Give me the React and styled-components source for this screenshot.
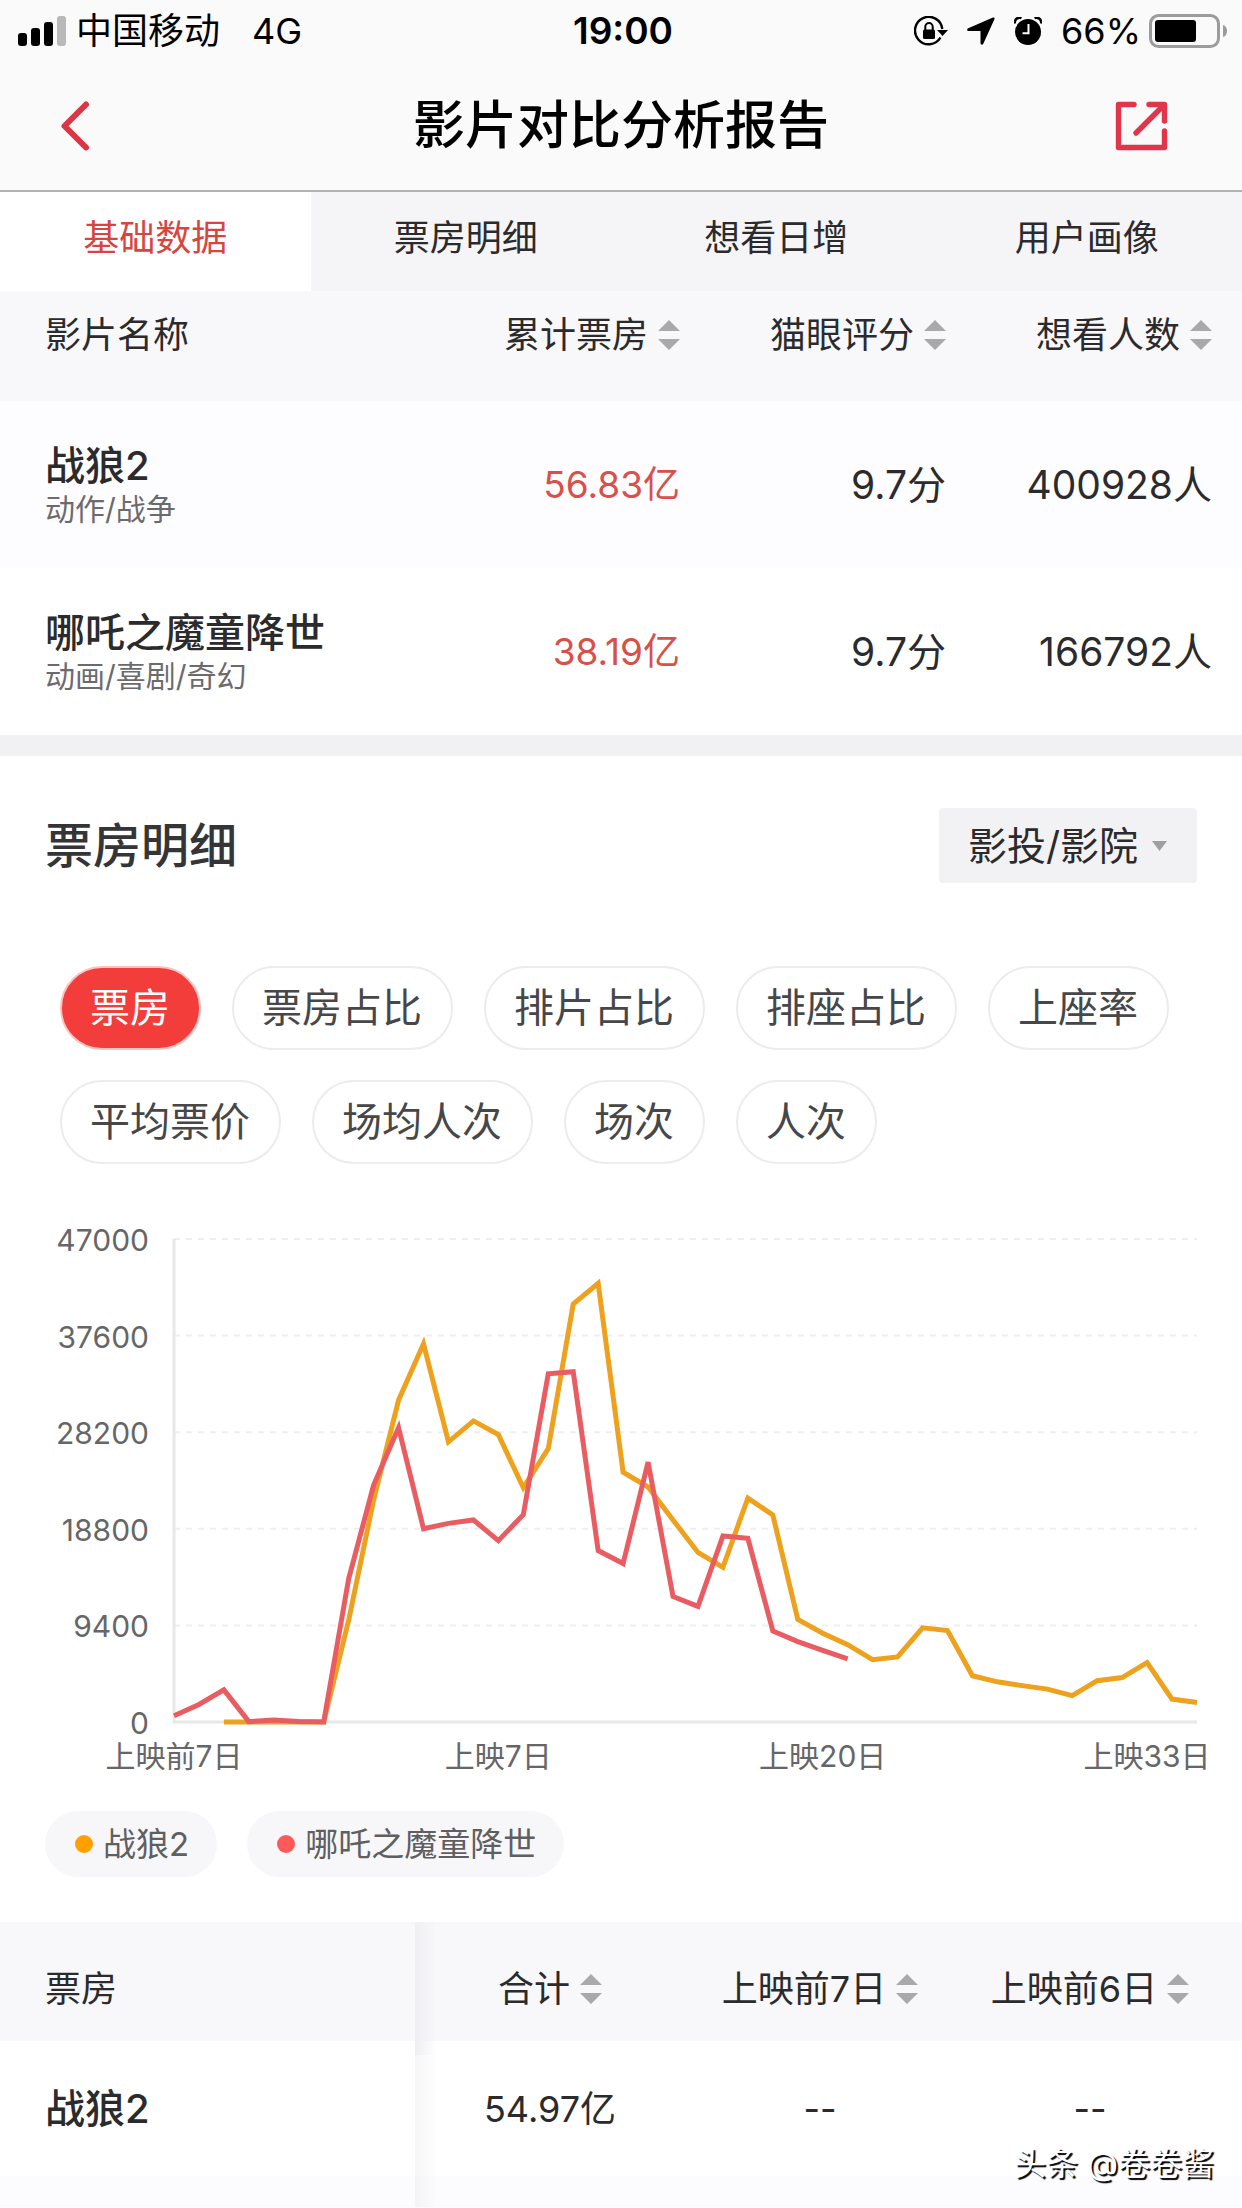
import React, { useState } from 'react'
import styled, { createGlobalStyle, css } from 'styled-components'

const GlobalStyle = createGlobalStyle`
  * {
    box-sizing: border-box;
  }
  body {
    margin: 0;
    background: #fff;
    color: #2b2b2d;
    font-family: Inter, 'Noto Sans CJK SC', sans-serif;
    font-size: 36px;
  }
  button, select {
    margin: 0;
    padding: 0;
    border: 0;
    background: none;
    color: inherit;
    font: inherit;
  }
  h1, h2, p {
    margin: 0;
  }
`

const Page = styled.div`
  min-height: 100vh;
  overflow: hidden;
`

const TopBar = styled.header`
  background: #fafafa;
  border-bottom: 2px solid #b2b2b4;
`

const StatusBar = styled.div`
  display: grid;
  grid-template-columns: 1fr auto 1fr;
  align-items: center;
  height: 62px;
  padding: 0 14px 0 18px;
  color: #000;
  line-height: 44px;
`

const StatusGroup = styled.div`
  display: flex;
  align-items: center;
  justify-content: ${props => props.$end ? 'flex-end' : 'flex-start'};
  gap: ${props => props.$gap}px;
`

const Carrier = styled.span`
  margin-right: 22px;
`

const Clock = styled.time`
  font-size: 37px;
  font-weight: 600;
`

const Battery = styled.span`
  display: flex;
  align-items: center;
  gap: 8px;
`

const NavBar = styled.div`
  display: grid;
  grid-template-columns: 1fr auto 1fr;
  align-items: center;
  height: 128px;
  padding: 0 58px;
`

const PageTitle = styled.h1`
  color: #000;
  font-size: 52px;
  font-weight: 500;
  line-height: 72px;
`

const IconButton = styled.button`
  display: flex;
  justify-self: ${props => props.$end ? 'end' : 'start'};
  padding-right: ${props => props.$end ? 15 : 0}px;
  cursor: pointer;
`

const Tabs = styled.nav`
  display: grid;
  grid-template-columns: repeat(4, 1fr);
  background: #f5f4f6;
`

const Tab = styled.button`
  height: 99px;
  padding-bottom: 8px;
  line-height: 52px;
  cursor: pointer;
  ${props => props.$active && css`
    background: #fff;
    color: #d8453f;
  `}
`

const Table = styled.table`
  width: 100%;
  border-collapse: collapse;
  table-layout: fixed;
`

const HeadRow = styled.tr`
  background: #f8f7fa;
  line-height: 52px;
`

const MovieHead = styled.th`
  width: ${props => props.$width || 'auto'};
  height: 110px;
  padding: 0 0 22px;
  font-weight: 400;
  text-align: right;
  &:first-child {
    padding-left: 45px;
    text-align: left;
  }
  &:last-child {
    padding-right: 30px;
  }
`

const SortButton = styled.button`
  display: inline-flex;
  align-items: center;
  gap: 10px;
  white-space: nowrap;
  cursor: pointer;
`

const MovieRow = styled.tr`
  background: ${props => props.$tinted ? '#fdfcfe' : '#fff'};
`

const MovieCell = styled.td`
  height: 167px;
  padding: 0;
  color: ${props => props.$red ? '#d8504a' : 'inherit'};
  font-size: ${props => props.$red ? 37 : 39}px;
  line-height: 56px;
  text-align: right;
  &:last-child {
    padding-right: 30px;
  }
`

const MovieNameCell = styled.th`
  padding: 4px 0 0 45px;
  font-weight: 400;
  text-align: left;
  white-space: nowrap;
`

const MovieName = styled.p`
  font-size: 40px;
  font-weight: 500;
  line-height: 44px;
`

const Genre = styled.p`
  color: #6b6b6e;
  font-size: 30px;
  line-height: 42px;
`

const Divider = styled.hr`
  height: 21px;
  margin: 0;
  border: 0;
  background: #f1f0f3;
`

const SectionHead = styled.div`
  display: flex;
  align-items: center;
  justify-content: space-between;
  padding: 52px 45px 0;
`

const SectionTitle = styled.h2`
  color: #353538;
  font-size: 48px;
  font-weight: 500;
  line-height: 72px;
`

const SelectBox = styled.label`
  display: grid;
  align-items: center;
  background: #f2f2f4;
  border-radius: 4px;
  svg {
    grid-area: 1 / 1;
    justify-self: end;
    margin-right: 30px;
    pointer-events: none;
  }
`

const Select = styled.select`
  grid-area: 1 / 1;
  height: 75px;
  padding: 0 58px 0 29px;
  appearance: none;
  font-size: 39px;
  line-height: 56px;
`

const Chips = styled.div`
  display: flex;
  flex-wrap: wrap;
  gap: 30px 31px;
  padding: 83px 60px 0;
`

const Chip = styled.button`
  height: 84px;
  padding: 0 29px 0 28px;
  border: 2px solid ${props => props.$active ? '#fbc4c1' : '#ececed'};
  border-radius: 42px;
  background: ${props => props.$active ? '#f23d3a' : '#fff'};
  color: ${props => props.$active ? '#fff' : '#47474a'};
  font-size: 40px;
  line-height: 56px;
  cursor: pointer;
`

const Chart = styled.svg`
  display: block;
  width: 100%;
  margin-top: 46px;
  text {
    fill: #666669;
    font-size: 30px;
  }
`

const Legend = styled.div`
  display: flex;
  gap: 30px;
  padding: 33px 45px 45px;
`

const LegendItem = styled.span`
  display: flex;
  align-items: center;
  gap: 10px;
  height: 66px;
  padding: 0 28px 0 30px;
  border-radius: 33px;
  background: #f7f6f9;
  color: #5f5f62;
  font-size: 33px;
  line-height: 48px;
`

const Dot = styled.span`
  width: 18px;
  height: 18px;
  border-radius: 50%;
  background: ${props => props.$color};
`

const DailyHead = styled.th`
  width: ${props => props.$width || 'auto'};
  height: 119px;
  padding: 28px ${props => props.$last ? 17 : 0}px 14px 0;
  font-weight: 400;
`

const frozen = css`
  position: relative;
  z-index: 1;
  padding-left: 45px;
  background: inherit;
  text-align: left;
  &::after {
    content: '';
    position: absolute;
    left: 100%;
    top: 0;
    bottom: 0;
    width: 22px;
    background: linear-gradient(to right, rgba(40, 30, 60, 0.04), rgba(40, 30, 60, 0));
  }
`

const FrozenHead = styled(DailyHead)`
  ${frozen}
  z-index: 2;
  &::after {
    bottom: -14px;
  }
`

const DailyRow = styled.tr`
  background: ${props => props.$tinted ? '#fcfbfd' : '#fff'};
`

const DailyCell = styled.td`
  height: ${props => props.$short ? 31 : 135}px;
  padding: 0 ${props => props.$last ? 17 : 0}px 0 0;
  line-height: 56px;
  text-align: center;
`

const FrozenCell = styled(DailyCell)`
  ${frozen}
  font-size: 40px;
  font-weight: 500;
`

const Watermark = styled.span`
  position: absolute;
  right: 28px;
  top: 2140px;
  color: #fff;
  font-size: 32px;
  line-height: 48px;
  text-shadow: 2px 2px 1px #000;
`

const DAYS = 42
const MAX = 47000

const series = [
  {
    name: '战狼2',
    color: '#ff9f00',
    stroke: '#eda11c',
    start: 2,
    values: [
      0, 0, 0, 0, 0, 9900, 21600, 31320, 36800, 27260, 29300, 27970, 22800, 26600,
      40670, 42680, 24300, 22870, 19660, 16500, 15050, 21790, 20150, 9980, 8640, 7520,
      6070, 6330, 9160, 8900, 4500, 3910, 3540, 3200, 2570, 4020, 4320, 5770, 2230, 1900,
    ],
  },
  {
    name: '哪吒之魔童降世',
    color: '#ff5a5a',
    stroke: '#e95d62',
    start: 0,
    values: [
      600, 1710, 3130, 40, 190, 40, 0, 13930, 23050, 28640, 18810, 19330, 19660, 17650,
      20180, 33890, 34080, 16680, 15420, 25290, 12215, 11250, 18100, 17880, 8860, 7820,
      6960, 6150,
    ],
  },
]

const xLabels = [
  { day: 0, text: '上映前7日' },
  { day: 13, text: '上映7日' },
  { day: 26, text: '上映20日' },
  { day: 39, text: '上映33日' },
]

const movies = [
  { name: '战狼2', genre: '动作/战争', total: '56.83亿', score: '9.7分', fans: '400928人' },
  { name: '哪吒之魔童降世', genre: '动画/喜剧/奇幻', total: '38.19亿', score: '9.7分', fans: '166792人' },
]

const tabs = ['基础数据', '票房明细', '想看日增', '用户画像']
const metrics = ['票房', '票房占比', '排片占比', '排座占比', '上座率', '平均票价', '场均人次', '场次', '人次']

const SignalIcon = () => (
  <svg width="48" height="30" viewBox="0 0 48 30" aria-hidden="true">
    <rect x="0" y="17" width="9" height="13" rx="3" />
    <rect x="13" y="12" width="9" height="18" rx="3" />
    <rect x="26" y="6" width="9" height="24" rx="3" />
    <rect x="39" y="0" width="9" height="30" rx="3" fill="#b9b9b9" />
  </svg>
)

const RotationLockIcon = () => (
  <svg width="34" height="30" viewBox="0 0 34 30" aria-hidden="true">
    <path d="M26.5 21.5A13.7 13.7 0 1 1 28.3 13" fill="none" stroke="#000" strokeWidth="2.4" />
    <path d="M23 14h11l-5.500 6z" />
    <rect x="9" y="13.500" width="12" height="9.500" rx="1.500" />
    <path d="M11.300 14v-3.200a3.700 3.700 0 0 1 7.400 0V14" fill="none" stroke="#000" strokeWidth="2" />
  </svg>
)

const LocationIcon = () => (
  <svg width="28" height="28" viewBox="0 0 28 28" aria-hidden="true">
    <path d="M26 .6 1.200 11.200c-1.700.8-1.300 2.800.6 2.800h11.700v12c0 2 2.100 2.300 2.900.5L27.400 2.200C28 .9 27.200.1 26 .6z" />
  </svg>
)

const AlarmIcon = () => (
  <svg width="28" height="28" viewBox="0 0 28 28" aria-hidden="true">
    <circle cx="14" cy="15" r="13" />
    <path d="M.8 6.500A5 5 0 0 1 7.500 1M27.200 6.500A5 5 0 0 0 20.500 1" fill="none" stroke="#000" strokeWidth="2.600" />
    <path d="M14.500 7v9.200H8.500" fill="none" stroke="#fff" strokeWidth="2" />
  </svg>
)

const BatteryIcon = () => (
  <svg width="79" height="34" viewBox="0 0 79 34" aria-hidden="true">
    <rect x="1.500" y="1.500" width="68" height="31" rx="8" fill="none" stroke="#9c9c9c" strokeWidth="3" />
    <rect x="6" y="6" width="41" height="22" rx="3" />
    <path d="M74 11c2.800.8 4 3 4 6s-1.200 5.200-4 6z" fill="#9c9c9c" />
  </svg>
)

const BackIcon = () => (
  <svg width="34" height="52" viewBox="0 0 34 52" aria-hidden="true">
    <path d="M28 4.500 6.500 26 28 47.500" fill="none" stroke="#dc3545" strokeWidth="6" strokeLinecap="round" strokeLinejoin="round" />
  </svg>
)

const ShareIcon = () => (
  <svg width="54" height="50" viewBox="0 0 54 50" aria-hidden="true">
    <g fill="none" stroke="#e0354a" strokeWidth="5.400" strokeLinecap="round" strokeLinejoin="round">
      <path d="M19 3.500H3.500v43h46V30" />
      <path d="M34 3.500h15.500V20M48 5 21 32" />
    </g>
  </svg>
)

const SortIcon = () => (
  <svg width="22" height="30" viewBox="0 0 22 30" fill="#a9a9ac" aria-hidden="true">
    <path d="M11 0l11 11H0zM11 30l11-11H0z" />
  </svg>
)

const left = 174
const right = 1197
const top = 29
const bottom = 512

const xOf = day => left + (right - left) * day / (DAYS - 1)
const yOf = value => bottom - (bottom - top) * value / MAX

const BoxOfficeChart = () => (
  <Chart viewBox="0 0 1242 568" role="img" aria-label="票房走势">
    {[1, 2, 3, 4, 5].map(step => (
      <line
        key={step}
        x1={left}
        x2={right}
        y1={yOf(step * 9400)}
        y2={yOf(step * 9400)}
        stroke="#eeeeee"
        strokeWidth="2"
        strokeDasharray="6 6"
      />
    ))}
    <path d={`M${left} ${top}V${bottom}H${right}`} fill="none" stroke="#e8e8e8" strokeWidth="3" />
    {[0, 1, 2, 3, 4, 5].map(step => (
      <text key={step} x="149" y={yOf(step * 9400) + 12} textAnchor="end">{step * 9400}</text>
    ))}
    {xLabels.map(label => (
      <text key={label.day} x={xOf(label.day)} y="557" textAnchor="middle">{label.text}</text>
    ))}
    {series.map(line => (
      <polyline
        key={line.name}
        points={line.values.map((value, i) => `${xOf(line.start + i)},${yOf(value)}`).join(' ')}
        fill="none"
        stroke={line.stroke}
        strokeWidth="5"
      />
    ))}
  </Chart>
)

const SortHeader = ({ children }) => (
  <SortButton type="button">
    {children}
    <SortIcon />
  </SortButton>
)

const App = () => {
  const [tab, setTab] = useState(tabs[0])
  const [metric, setMetric] = useState(metrics[0])

  return (
    <Page>
      <GlobalStyle />
      <TopBar>
        <StatusBar>
          <StatusGroup $gap={10}>
            <SignalIcon />
            <Carrier>中国移动</Carrier>
            <span>4G</span>
          </StatusGroup>
          <Clock>19:00</Clock>
          <StatusGroup $gap={19} $end>
            <RotationLockIcon />
            <LocationIcon />
            <AlarmIcon />
            <Battery>
              66%
              <BatteryIcon />
            </Battery>
          </StatusGroup>
        </StatusBar>
        <NavBar>
          <IconButton type="button" aria-label="返回"><BackIcon /></IconButton>
          <PageTitle>影片对比分析报告</PageTitle>
          <IconButton type="button" aria-label="分享" $end><ShareIcon /></IconButton>
        </NavBar>
      </TopBar>

      <Tabs>
        {tabs.map(name => (
          <Tab key={name} type="button" $active={name === tab} onClick={() => setTab(name)}>{name}</Tab>
        ))}
      </Tabs>

      <Table>
        <thead>
          <HeadRow>
            <MovieHead>影片名称</MovieHead>
            <MovieHead $width="266px"><SortHeader>累计票房</SortHeader></MovieHead>
            <MovieHead $width="266px"><SortHeader>猫眼评分</SortHeader></MovieHead>
            <MovieHead $width="296px"><SortHeader>想看人数</SortHeader></MovieHead>
          </HeadRow>
        </thead>
        <tbody>
          {movies.map((movie, i) => (
            <MovieRow key={movie.name} $tinted={i % 2 === 0}>
              <MovieNameCell scope="row">
                <MovieName>{movie.name}</MovieName>
                <Genre>{movie.genre}</Genre>
              </MovieNameCell>
              <MovieCell $red>{movie.total}</MovieCell>
              <MovieCell>{movie.score}</MovieCell>
              <MovieCell>{movie.fans}</MovieCell>
            </MovieRow>
          ))}
        </tbody>
      </Table>

      <Divider />

      <SectionHead>
        <SectionTitle>票房明细</SectionTitle>
        <SelectBox>
          <Select aria-label="影投/影院" defaultValue="影投/影院">
            <option>影投/影院</option>
          </Select>
          <svg width="15" height="10" viewBox="0 0 15 10" aria-hidden="true">
            <path d="M0 0h15L7.500 10z" fill="#a0a0a3" />
          </svg>
        </SelectBox>
      </SectionHead>

      <Chips>
        {metrics.map(name => (
          <Chip key={name} type="button" $active={name === metric} onClick={() => setMetric(name)}>{name}</Chip>
        ))}
      </Chips>

      <BoxOfficeChart />

      <Legend>
        {series.map(line => (
          <LegendItem key={line.name}>
            <Dot $color={line.color} />
            {line.name}
          </LegendItem>
        ))}
      </Legend>

      <Table>
        <thead>
          <HeadRow>
            <FrozenHead $width="415px">票房</FrozenHead>
            <DailyHead><SortHeader>合计</SortHeader></DailyHead>
            <DailyHead><SortHeader>上映前7日</SortHeader></DailyHead>
            <DailyHead $width="287px" $last><SortHeader>上映前6日</SortHeader></DailyHead>
          </HeadRow>
        </thead>
        <tbody>
          <DailyRow>
            <FrozenCell as="th" scope="row">战狼2</FrozenCell>
            <DailyCell>54.97亿</DailyCell>
            <DailyCell>--</DailyCell>
            <DailyCell $last>--</DailyCell>
          </DailyRow>
          <DailyRow $tinted>
            <FrozenCell $short />
            <DailyCell $short colSpan="3" />
          </DailyRow>
        </tbody>
      </Table>
      <Watermark>头条 @卷卷酱</Watermark>
    </Page>
  )
}

export default App
